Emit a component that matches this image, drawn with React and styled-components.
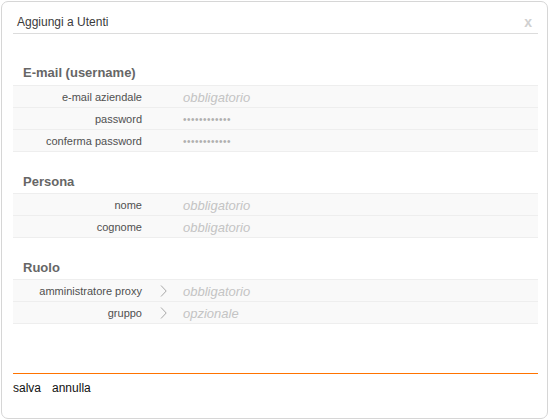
import React from "react";
import styled, { createGlobalStyle } from "styled-components";

const Global = createGlobalStyle`
  html, body { margin: 0; padding: 0; background: #fff; }
  body { font-family: "Liberation Sans", Arial, sans-serif; }
  * { box-sizing: border-box; }
`;

const Dialog = styled.div`
  margin: 1px 0 0 1px;
  width: 547px;
  height: 418px;
  border: 1px solid #d6d6d6;
  border-radius: 7px;
  padding: 0 9px 0 11px;
  display: flex;
  flex-direction: column;
  background: #fff;
`;

const Header = styled.div`
  display: flex;
  justify-content: space-between;
  align-items: flex-start;
  padding: 13px 6px 4px 4px;
  border-bottom: 1px solid #dcdcdc;
`;

const Title = styled.div`
  font-size: 12px;
  line-height: 14px;
  color: #3a3a3a;
`;

const Close = styled.div`
  font-size: 14px;
  line-height: 14px;
  font-weight: bold;
  color: #d0d0d0;
  cursor: pointer;
`;

const Form = styled.div`
  flex: 1;
`;

const Section = styled.div`
  margin-top: ${(p) => p.$top}px;
`;

const Heading = styled.div`
  font-size: 13px;
  font-weight: bold;
  line-height: 16px;
  color: #666;
  padding-left: 10px;
  margin-bottom: ${(p) => p.$gap}px;
`;

const Rows = styled.div`
  border-bottom: 1px solid #eeeeee;
`;

const Row = styled.div`
  display: grid;
  grid-template-columns: 129px 41px 1fr;
  align-items: center;
  height: 22px;
  border-top: 1px solid #eeeeee;
  background: #f9f9f9;
`;

const Label = styled.div`
  text-align: right;
  font-size: 11px;
  line-height: 21px;
  padding-top: 1px;
  color: #505050;
`;

const ArrowCell = styled.div`
  display: flex;
  align-items: center;
  padding-left: 18px;
  height: 21px;
`;

const Value = styled.div`
  font-size: 13px;
  font-style: italic;
  line-height: 21px;
  color: #c4c4c4;
`;

const Dots = styled.div`
  font-size: 10px;
  letter-spacing: 0.5px;
  line-height: 21px;
  color: #b0b0b0;
  padding-top: 1px;
`;

const Rule = styled.div`
  height: 1px;
  background: #ff7300;
`;

const Footer = styled.div`
  padding: 7px 0 0 0;
  height: 44px;
  display: flex;
  gap: 11px;
`;

const Action = styled.span`
  font-size: 12px;
  line-height: 14px;
  color: #111;
  cursor: pointer;
`;

const Chevron = () => (
  <svg width="7" height="12" viewBox="0 0 7 12">
    <path d="M1 0.5 L6.2 6 L1 11.5" fill="none" stroke="#a8a8a8" strokeWidth="1" />
  </svg>
);

const sections = [
  {
    title: "E-mail (username)",
    top: 31,
    gap: 4,
    rows: [
      { label: "e-mail aziendale", value: "obbligatorio" },
      { label: "password", password: true },
      { label: "conferma password", password: true },
    ],
  },
  {
    title: "Persona",
    top: 22,
    gap: 3,
    rows: [
      { label: "nome", value: "obbligatorio" },
      { label: "cognome", value: "obbligatorio" },
    ],
  },
  {
    title: "Ruolo",
    top: 22,
    gap: 3,
    rows: [
      { label: "amministratore proxy", value: "obbligatorio", arrow: true },
      { label: "gruppo", value: "opzionale", arrow: true },
    ],
  },
];

export default function App() {
  return (
    <>
      <Global />
      <Dialog>
        <Header>
          <Title>Aggiungi a Utenti</Title>
          <Close>x</Close>
        </Header>
        <Form>
          {sections.map((s) => (
            <Section key={s.title} $top={s.top}>
              <Heading $gap={s.gap}>{s.title}</Heading>
              <Rows>
                {s.rows.map((r) => (
                  <Row key={r.label}>
                    <Label>{r.label}</Label>
                    <ArrowCell>{r.arrow && <Chevron />}</ArrowCell>
                    {r.password ? (
                      <Dots>{"\u2022".repeat(12)}</Dots>
                    ) : (
                      <Value>{r.value}</Value>
                    )}
                  </Row>
                ))}
              </Rows>
            </Section>
          ))}
        </Form>
        <Rule />
        <Footer>
          <Action>salva</Action>
          <Action>annulla</Action>
        </Footer>
      </Dialog>
    </>
  );
}
